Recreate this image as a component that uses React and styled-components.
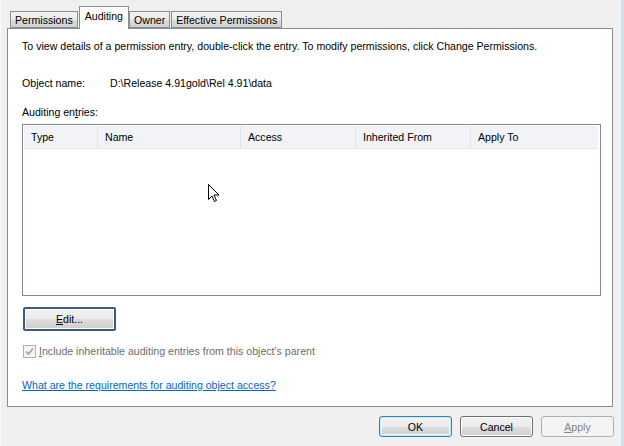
import React from "react";
import styled, { createGlobalStyle } from "styled-components";

const FONT = `"Liberation Sans", Arial, sans-serif`;
const SIZE = "10.6px";

const GlobalStyle = createGlobalStyle`
  html, body {
    margin: 0;
    padding: 0;
    background: #f0f0f0;
  }
  body {
    font-family: ${FONT};
    font-size: ${SIZE};
    color: #000;
  }
`;

const Window = styled.div`
  position: relative;
  width: 620px;
  height: 446px;
  background: #f0f0f0;
  border-left: 1px solid #fafafa;
  border-right: 3px solid #cfe0f1;
  display: flex;
  flex-direction: column;
`;

const TabStrip = styled.div`
  display: flex;
  align-items: flex-end;
  height: 28px;
  padding-left: 9px;
  position: relative;
  z-index: 1;
`;

const Tab = styled.div`
  height: ${({ $active }) => ($active ? "23px" : "17px")};
  margin-bottom: ${({ $active }) => ($active ? "-1px" : "0")};
  margin-right: ${({ $active }) => ($active ? "0" : "1px")};
  padding: ${({ $active }) => ($active ? "3px 5px 0" : "0 4px")};
  border: 1px solid #898c95;
  border-bottom: ${({ $active }) => ($active ? "none" : "1px solid #898c95")};
  background: ${({ $active }) =>
    $active ? "#fff" : "linear-gradient(#f2f2f2 0%, #ebebeb 50%, #dddddd 51%, #cfcfcf 100%)"};
  display: flex;
  align-items: ${({ $active }) => ($active ? "flex-start" : "center")};
  box-sizing: border-box;
  font-size: ${SIZE};
  color: #000;
`;

const Panel = styled.div`
  margin-left: 6px;
  width: 606px;
  height: 379px;
  box-sizing: border-box;
  border: 1px solid #898c95;
  background: #fff;
  padding: 0 14px;
  display: flex;
  flex-direction: column;
`;

const Intro = styled.div`
  margin-top: 11px;
  line-height: 13px;
`;

const InfoRow = styled.div`
  display: flex;
  margin-top: 24px;
  line-height: 13px;
`;

const InfoLabel = styled.span`
  width: 88px;
`;

const SectionLabel = styled.div`
  margin-top: 16px;
  line-height: 13px;
`;

const ListBox = styled.div`
  margin-top: 5px;
  width: 579px;
  height: 172px;
  box-sizing: border-box;
  border: 1px solid #828790;
  background: #fff;
  padding: 1px 2px 0 1px;
`;

const HeaderRow = styled.div`
  display: flex;
  height: 22px;
  background: #f1f3f6;
  border-bottom: 1px solid #e3e6ea;
`;

const HeaderCell = styled.div`
  width: ${({ $w }) => $w}px;
  box-sizing: border-box;
  padding-left: 7px;
  display: flex;
  align-items: center;
  border-right: 1px solid #dfe3e8;
  font-size: ${SIZE};
  color: #000;
  &:last-child {
    border-right: none;
    flex: 1;
  }
`;

const Button = styled.button`
  width: 73px;
  height: 21px;
  box-sizing: border-box;
  border: 1px solid #707070;
  border-radius: 3px;
  background: linear-gradient(#f2f2f2 0%, #ebebeb 50%, #dddddd 51%, #cfcfcf 100%);
  box-shadow: inset 0 0 0 1px #fcfcfc;
  font-family: ${FONT};
  font-size: ${SIZE};
  color: #000;
  padding: 0;
`;

const EditButton = styled(Button)`
  margin-top: 11px;
  margin-left: 1px;
  width: 93px;
  height: 24px;
  border: 2px solid #3c5a82;
  border-radius: 2px;
`;

const DefaultButton = styled(Button)`
  border-color: #3c7fb1;
  box-shadow: inset 0 0 0 1px #c4e5f6, inset 0 0 0 2px #f0f9fd;
`;

const DisabledButton = styled(Button)`
  border-color: #adb2b5;
  background: #f4f4f4;
  box-shadow: none;
  color: #838383;
`;

const CheckRow = styled.div`
  margin-top: 14px;
  margin-left: 1px;
  display: flex;
  align-items: center;
  color: #6d6d6d;
  line-height: 13px;
`;

const CheckBox = styled.span`
  width: 13px;
  height: 13px;
  box-sizing: border-box;
  border: 1px solid #b1b1b1;
  background: #f4f4f4;
  margin-right: 3px;
  display: flex;
  align-items: center;
  justify-content: center;
`;

const HelpLink = styled.a`
  margin-top: 21px;
  color: #0066cc;
  text-decoration: underline;
  line-height: 13px;
  cursor: pointer;
  align-self: flex-start;
`;

const BottomBar = styled.div`
  display: flex;
  justify-content: flex-end;
  gap: 8px;
  padding-right: 7px;
  margin-top: 9px;
`;

const Cursor = styled.svg`
  position: absolute;
  left: 207px;
  top: 184px;
`;

const columns = [
  { label: "Type", w: 74 },
  { label: "Name", w: 143 },
  { label: "Access", w: 115 },
  { label: "Inherited From", w: 115 },
  { label: "Apply To", w: 0 },
];

export default function App() {
  return (
    <>
      <GlobalStyle />
      <Window>
        <TabStrip>
          <Tab>Permissions</Tab>
          <Tab $active>Auditing</Tab>
          <Tab>Owner</Tab>
          <Tab>Effective Permissions</Tab>
        </TabStrip>
        <Panel>
          <Intro>
            To view details of a permission entry, double-click the entry. To modify permissions, click Change Permissions.
          </Intro>
          <InfoRow>
            <InfoLabel>Object name:</InfoLabel>
            <span>D:\Release 4.91gold\Rel 4.91\data</span>
          </InfoRow>
          <SectionLabel>
            Auditing en<u>t</u>ries:
          </SectionLabel>
          <ListBox>
            <HeaderRow>
              {columns.map((c) => (
                <HeaderCell key={c.label} $w={c.w}>
                  {c.label}
                </HeaderCell>
              ))}
            </HeaderRow>
          </ListBox>
          <EditButton>
            <u>E</u>dit...
          </EditButton>
          <CheckRow>
            <CheckBox>
              <svg width="9" height="9" viewBox="0 0 9 9">
                <path d="M1 4.5 L3.5 7 L8 1.5" fill="none" stroke="#a2a2a2" strokeWidth="1.6" />
              </svg>
            </CheckBox>
            <span>
              <u>I</u>nclude inheritable auditing entries from this object's parent
            </span>
          </CheckRow>
          <HelpLink>What are the requirements for auditing object access?</HelpLink>
        </Panel>
        <BottomBar>
          <DefaultButton>OK</DefaultButton>
          <Button>Cancel</Button>
          <DisabledButton>
            <u>A</u>pply
          </DisabledButton>
        </BottomBar>
        <Cursor width="12" height="19" viewBox="0 0 12 19">
          <path
            d="M0.5 0.5 L0.5 15.5 L4 12 L6.5 17.5 L8.5 16.5 L6 11 L11 11 Z"
            fill="#fff"
            stroke="#000"
            strokeWidth="1"
          />
        </Cursor>
      </Window>
    </>
  );
}
